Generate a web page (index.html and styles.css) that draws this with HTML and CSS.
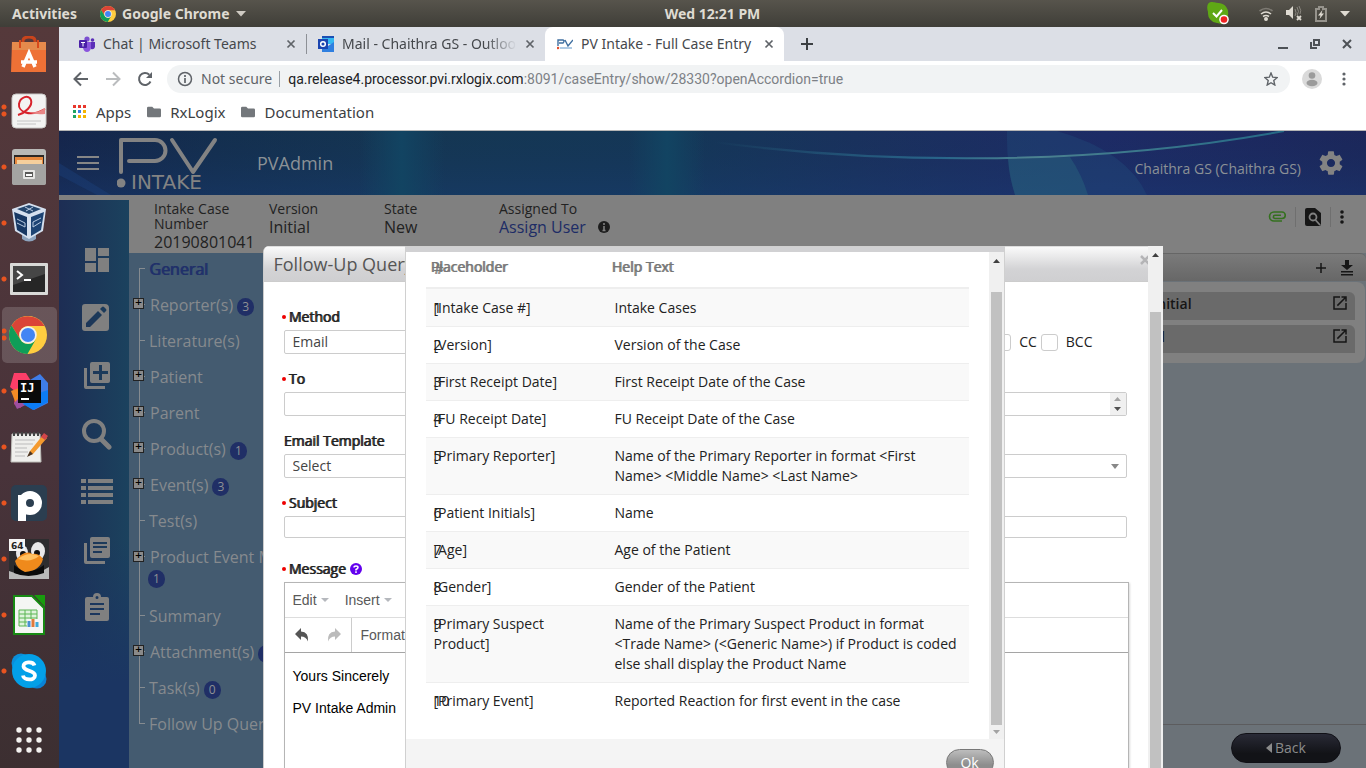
FILE: index.html
```html
<!DOCTYPE html>
<html lang="en">
<head>
<meta charset="utf-8">
<title>PV Intake - Full Case Entry</title>
<link rel="stylesheet" href="styles.css">
</head>
<body>
<svg class="defs" width="0" height="0" aria-hidden="true">
  <symbol id="chrome" viewBox="0 0 36 36">
    <circle cx="18" cy="18" r="18" fill="#ffcd40"/>
    <path d="M2.4 9A18 18 0 0 1 33.6 9.500H18a8.500 8.500 0 0 0-7.700 12z" fill="#db4437"/>
    <path d="M2.4 9A18 18 0 0 0 17.500 36L25.500 22a8.500 8.500 0 0 1-15.200-.5z" fill="#0f9d58"/>
    <circle cx="18" cy="18" r="8.300" fill="#f1f1f1"/><circle cx="18" cy="18" r="6.700" fill="#4285f4"/>
  </symbol>
  <symbol id="close" viewBox="0 0 10 10"><path d="M1.500 1.500l7 7m0-7l-7 7" stroke="#5f6368" stroke-width="1.700" fill="none"/></symbol>
  <symbol id="folder" viewBox="0 0 16 14"><path d="M1.500 1h4.500l2 2h6.500A1.500 1.500 0 0 1 16 4.500v7a1.500 1.500 0 0 1-1.500 1.500h-13A1.500 1.500 0 0 1 0 11.500v-9A1.500 1.500 0 0 1 1.500 1z" fill="#73777b"/></symbol>
  <symbol id="open" viewBox="0 0 24 24"><path d="M19 19H5V5h7V3H3v18h18v-9h-2zM14 3v2h3.600l-9.800 9.800 1.400 1.400L19 6.400V10h2V3z" fill="#161616"/></symbol>
</svg>

<header class="topbar">
  <div class="topbar-left">
    <span>Activities</span>
    <svg width="16" height="16"><use href="#chrome"/></svg>
    <span class="app-menu">Google Chrome</span>
    <svg width="10" height="6" viewBox="0 0 10 6"><path d="M0 0h10L5 5.500z" fill="#cfcbc3"/></svg>
  </div>
  <time class="clock">Wed 12:21 PM</time>
  <div class="topbar-right">
    <svg class="skype-tray" width="22" height="23" viewBox="0 0 22 23"><path d="M4 0C8 0 9 1 12 1a10 10 0 0 1 9 12c1 6-2 9-6 9-2 0-3-1-5-1A10 10 0 0 1 1 10C-1 4 1 0 4 0z" fill="#5fa815"/><path d="M6 11l3.500 3.500L15 8" stroke="#fff" stroke-width="2" fill="none"/><circle cx="17" cy="17.500" r="4.800" fill="#fff"/><circle cx="17" cy="17.500" r="3.300" fill="#e22"/></svg>
    <svg width="14" height="14" viewBox="0 0 14 14" fill="none" stroke="#dfdbd2" stroke-width="1.600"><path d="M.5 4q6.500-5 13 0" stroke="#7d7a73"/><path d="M2 7q5-4 10 0M4 9.500q3-2 6 0"/><circle cx="7" cy="12" r="1.200" fill="#dfdbd2"/></svg>
    <svg width="16" height="15" viewBox="0 0 16 15"><path d="M0 4h3l4-4v13L3 9H0z" fill="#dfdbd2"/><path d="M9 3q2 3.500 0 7M11 1q3 5 0 8M13 0q3 5 1 8" stroke="#8a877f" fill="none"/><path d="M11 10l4 4m0-4l-4 4" stroke="#dfdbd2" stroke-width="1.800"/></svg>
    <svg width="12" height="16" viewBox="0 0 12 16"><path d="M1 3h3V1h4v2h3v12H1z" stroke="#96938c" stroke-width="2" fill="none"/><path d="M7.500 4L3 9.500h2.500L4.500 13 9 7.500H6.500z" fill="#dfdbd2"/></svg>
    <svg width="10" height="6" viewBox="0 0 10 6"><path d="M0 0h10L5 5.500z" fill="#dfdbd2"/></svg>
  </div>
</header>

<div class="desktop">
  <nav class="dock" aria-label="Dock">
    <div class="dock-item"><svg width="36" height="38" viewBox="0 0 36 38"><path d="M12 8V5q0-4 6-4t6 4v3" stroke="#c9441c" stroke-width="3" fill="none"/><path d="M1 6h34v30H0z" fill="#ee7136"/><path d="M1 6h34v8H1z" fill="#e58a4c"/><path d="M9 4v8M27 4v8" stroke="#d84a1b" stroke-width="2"/><path d="M12 31l6-14 6 14M10 26h16" stroke="#fff" stroke-width="3.500" fill="none"/></svg></div>
    <div class="dock-item run two"><svg width="36" height="36" viewBox="0 0 36 36"><rect x="1" y="1" width="34" height="34" rx="4" fill="#f3f3f2" stroke="#c9c9c7"/><path d="M7 22C14 20 22 13 20 7S9 4 8 11s10 14 26 5" stroke="#d8232c" stroke-width="2" fill="none"/><path d="M16 19q9 2 18-4v6q-9 1-18-2z" fill="#e98786"/><path d="M6 28h24M6 31h19" stroke="#c4c4c4"/></svg></div>
    <div class="dock-item run"><svg width="36" height="38" viewBox="0 0 36 38"><rect x="1" y="1" width="34" height="36" rx="3" fill="#b9b9b7"/><path d="M3 7h30v9H3z" fill="#2c2826"/><path d="M4 9h28v7H4z" fill="#e8893f"/><path d="M6 12h25v4H6z" fill="#f5cf9c"/><path d="M1 16h34v19q0 2-2 2H3q-2 0-2-2z" fill="#a4a4a2"/><rect x="12" y="22" width="12" height="9" rx="1" fill="#e6e6e4"/><rect x="14" y="24" width="8" height="5" fill="#5a5a58"/><rect x="15" y="26" width="6" height="2" fill="#fff"/></svg></div>
    <div class="dock-item run"><svg width="34" height="40" viewBox="0 0 34 40"><path d="M10 32h14v4q-7 5-14 0z" fill="#8da4bf"/><path d="M17 0l17 6-3 22-14 8L3 28 0 6z" fill="#d5e0ef"/><path d="M17 2l12 4-12 5L5 6z" fill="#24466e"/><path d="M2 9l13 5v19L5 27z" fill="#173864"/><path d="M32 9l-13 5v19l10-6z" fill="#1d4474"/><path d="M5 16l8 4v4l-8-4M29 15l-8 4v5l8-5M13 4l8 4M21 4l-7 4" stroke="#b9cbe2" fill="none"/></svg></div>
    <div class="dock-item run"><svg width="38" height="32" viewBox="0 0 38 32"><rect width="38" height="32" rx="1" fill="#d9d9d7"/><rect x="3" y="3" width="32" height="26" fill="#262626"/><path d="M3 3h32v8L3 22z" fill="#464646"/><path d="M7 8l5 4-5 4" stroke="#fff" stroke-width="2" fill="none"/><path d="M14 17h7" stroke="#fff" stroke-width="2"/></svg></div>
    <div class="dock-item run two active"><svg width="38" height="38"><use href="#chrome"/></svg></div>
    <div class="dock-item run"><svg width="38" height="38" viewBox="0 0 38 38"><path d="M4 1h12l5 8-6 22-5 5-6-4 2-12-6-5z" fill="#fc3e68"/><path d="M1 19l8-3 3 10-6 6z" fill="#f38b25"/><path d="M4 31l8-8 8 8-13 6z" fill="#9b4fa0"/><path d="M20 8l10-6 8 9v20l-14 7-12-7z" fill="#3f7de8"/><path d="M26 22l12-4v12l-15 8-10-6z" fill="#0c7cf5"/><rect x="8" y="8" width="23" height="23" fill="#0a0a0a"/><text x="10" y="20" class="ij">IJ</text><path d="M11 27h8" stroke="#fff" stroke-width="2"/></svg></div>
    <div class="dock-item run"><svg width="38" height="32" viewBox="0 0 38 32"><path d="M2 3h28l1 28H1z" fill="#efefec" stroke="#bdbdb8"/><path d="M4 1v4M8 1v4M12 1v4M16 1v4M20 1v4M24 1v4M28 1v4" stroke="#444" stroke-width="2"/><path d="M5 9h20M5 13h18M5 17h12M5 21h13M5 25h10" stroke="#bbb"/><path d="M20 20L33 4l4 3-14 16-5 2z" fill="#f49a2f"/><path d="M31 6l3-4 4 3-3 4z" fill="#d4464a"/><path d="M20 20l3 3-6 3z" fill="#4a3626"/></svg></div>
    <div class="dock-item run"><svg width="36" height="36" viewBox="0 0 36 36"><rect width="36" height="36" rx="5" fill="#2b3e50"/><path d="M11 36V10" stroke="#fff" stroke-width="8"/><circle cx="19" cy="18" r="8" stroke="#fff" stroke-width="8" fill="none"/></svg></div>
    <div class="dock-item run"><svg width="40" height="40" viewBox="0 0 40 40"><rect width="40" height="40" fill="#2d2d2f"/><path d="M0 32q20 9 40-4v12H0z" fill="#b9b9b9"/><path d="M5 26q14 12 30 0v8q-16 6-30 0z" fill="#0a0a0a"/><ellipse cx="29" cy="12" rx="7" ry="9" fill="#e8e8e8"/><ellipse cx="13" cy="14" rx="6" ry="8" fill="#e8e8e8"/><circle cx="28" cy="14" r="3" fill="#111"/><circle cx="14" cy="15" r="3" fill="#111"/><path d="M6 22q10-12 17-7 7-1 11 5-3 12-18 13Q8 30 6 22z" fill="#ef8a1c"/><path d="M9 20q10-8 21-3-8 7-21 3z" fill="#ffc060"/><rect width="16" height="12" fill="#f5f5f5"/><text x="2" y="10" class="badge64">64</text></svg></div>
    <div class="dock-item run"><svg width="32" height="40" viewBox="0 0 32 40"><path d="M1 1h18l12 12v26H1z" fill="#f4f6f4" stroke="#178a13" stroke-width="2"/><path d="M21 0h11v12z" fill="#199c0e"/><path d="M6 15h18v16H6z" fill="#dff3dc" stroke="#5ab552"/><path d="M6 19h18M6 23h18M6 27h18M12 15v16M18 15v16" stroke="#5ab552"/><path d="M14 24h12v8H14z" fill="#f6f6f6"/><path d="M16 32v-6" stroke="#4a90d0" stroke-width="3"/><path d="M20 32v-8" stroke="#e07b3a" stroke-width="3"/><path d="M24 32v-5" stroke="#3faad8" stroke-width="3"/></svg></div>
    <div class="dock-item run"><svg width="36" height="36" viewBox="0 0 36 36"><circle cx="10" cy="10" r="9.500" fill="#0a8ed9"/><circle cx="26" cy="26" r="9.500" fill="#0a83d6"/><circle cx="18" cy="18" r="17" fill="#03a0e8"/><path d="M23.500 12.500C22 8 12 8.500 12.500 13.500S24 17 24 22.500 12.500 27.500 12 22.500" stroke="#fff" stroke-width="3.800" fill="none"/></svg></div>
    <button class="dock-item apps-grid" aria-label="Show applications"><svg width="26" height="26" viewBox="0 0 26 26" fill="#f3f1ef"><circle cx="3" cy="3" r="2.700"/><circle cx="13" cy="3" r="2.700"/><circle cx="23" cy="3" r="2.700"/><circle cx="3" cy="13" r="2.700"/><circle cx="13" cy="13" r="2.700"/><circle cx="23" cy="13" r="2.700"/><circle cx="3" cy="23" r="2.700"/><circle cx="13" cy="23" r="2.700"/><circle cx="23" cy="23" r="2.700"/></svg></button>
  </nav>

  <div class="window">
    <div class="tabs">
      <div class="tab"><svg width="16" height="16" viewBox="0 0 16 16"><circle cx="8" cy="3" r="2.600" fill="#7b4fd0"/><circle cx="13.500" cy="4" r="1.800" fill="#5a2fb8"/><path d="M11 6h5v5q-1 3-4 2z" fill="#5a2fb8"/><path d="M4 6h8v6q-1 4-4 4t-4-4z" fill="#8a55dd"/><rect y="4" width="8" height="8" rx="1" fill="#4b1fa8"/><path d="M2 6.500h4M4 6.500v4" stroke="#fff"/></svg><span class="tab-title">Chat | Microsoft Teams</span><svg width="10" height="10"><use href="#close"/></svg></div>
      <div class="tab divided"><svg width="16" height="16" viewBox="0 0 16 16"><path d="M4 0h12v8H4z" fill="#35b8f1"/><path d="M4 0h12v2H4z" fill="#1a4fb5"/><path d="M4 8l6 2 6-4v10H4z" fill="#2f7fe0"/><rect y="3" width="10" height="10" fill="#1b45b0"/><circle cx="5" cy="8" r="2.300" stroke="#fff" stroke-width="1.500" fill="none"/></svg><span class="tab-title fade">Mail - Chaithra GS - Outlook</span><svg width="10" height="10"><use href="#close"/></svg></div>
      <div class="tab current"><svg width="16" height="16" viewBox="0 0 16 16" fill="none" stroke="#3f6fa0" stroke-width="1.400"><path d="M1 10V4h5q2 1 0 3H2M8 4l3 6 5-6"/><path d="M3 12h12" stroke="#8db4d8"/><circle cx="1" cy="12" r=".6" stroke="#e05030"/></svg><span class="tab-title">PV Intake - Full Case Entry</span><svg width="10" height="10"><use href="#close"/></svg></div>
      <button class="new-tab" aria-label="New tab"><svg width="12" height="12" viewBox="0 0 12 12"><path d="M6 0v12M0 6h12" stroke="#3c4043" stroke-width="2"/></svg></button>
      <div class="win-buttons">
        <svg width="10" height="10" viewBox="0 0 10 10"><path d="M0 9h10" stroke="#4d5156" stroke-width="2"/></svg>
        <svg width="10" height="10" viewBox="0 0 10 10" fill="none" stroke="#4d5156" stroke-width="2"><path d="M4 1h5v5H4zM1 3v6h6"/></svg>
        <svg width="10" height="10" viewBox="0 0 10 10"><path d="M1 1l8 8m0-8l-8 8" stroke="#4d5156" stroke-width="2"/></svg>
      </div>
    </div>
    <div class="toolbar">
      <svg width="16" height="16" viewBox="0 0 16 16" fill="none" stroke="#5f6368" stroke-width="2"><path d="M15 8H2M8 1.500L1.500 8 8 14.500"/></svg>
      <svg width="16" height="16" viewBox="0 0 16 16" fill="none" stroke="#babcbe" stroke-width="2"><path d="M1 8h13M8 1.500L14.500 8 8 14.500"/></svg>
      <svg width="16" height="16" viewBox="0 0 16 16"><path d="M13.500 10.500A6 6 0 1 1 12.300 3.700" fill="none" stroke="#5f6368" stroke-width="2"/><path d="M15 1v6H9z" fill="#5f6368"/></svg>
      <div class="omnibox">
        <svg width="16" height="16" viewBox="0 0 16 16"><circle cx="8" cy="8" r="6.500" fill="none" stroke="#5f6368" stroke-width="1.500"/><path d="M8 7v5M8 4v2" stroke="#5f6368" stroke-width="1.700"/></svg>
        <span class="insecure">Not secure</span>
        <span class="url"><b>qa.release4.processor.pvi.rxlogix.com</b>:8091/caseEntry/show/28330?openAccordion=true</span>
        <svg width="14" height="14" viewBox="0 0 14 14"><path d="M7 1l1.700 4.200 4.500.4-3.400 3 1 4.400L7 10.700 3.200 13l1-4.400-3.400-3 4.500-.4z" fill="none" stroke="#5f6368" stroke-width="1.400"/></svg>
      </div>
      <svg class="avatar" width="20" height="20" viewBox="0 0 20 20"><circle cx="10" cy="10" r="10" fill="#dadada"/><circle cx="10" cy="6.500" r="3.300" fill="#9b9b9b"/><ellipse cx="10" cy="14" rx="5.500" ry="3.300" fill="#9b9b9b"/></svg>
      <svg width="4" height="14" viewBox="0 0 4 14" fill="#5f6368"><circle cx="2" cy="2" r="1.600"/><circle cx="2" cy="7" r="1.600"/><circle cx="2" cy="12" r="1.600"/></svg>
    </div>
    <div class="bookmarks">
      <a href="#"><svg width="14" height="14" viewBox="0 0 14 14"><path d="M0 0h3v3H0zM5 0h3v3H5zM10 0h3v3h-3z" fill="#e8372c"/><path d="M0 5h3v3H0zM0 10h3v3H0z" fill="#1fa463"/><path d="M5 5h3v3H5z" fill="#3b7de8"/><path d="M10 5h3v3h-3zM5 10h3v3H5zM10 10h3v3h-3z" fill="#f4b400"/></svg>Apps</a>
      <a href="#"><svg width="14" height="14"><use href="#folder"/></svg>RxLogix</a>
      <a href="#"><svg width="14" height="14"><use href="#folder"/></svg>Documentation</a>
    </div>

    <div class="page">
      <header class="app-header">
        <svg class="header-art" viewBox="0 0 1307 64" preserveAspectRatio="none" aria-hidden="true">
          <defs>
            <linearGradient id="g1"><stop offset="0" stop-color="#16244b"/><stop offset=".12" stop-color="#14304f"/><stop offset=".3" stop-color="#153a55"/><stop offset=".48" stop-color="#153a5a"/><stop offset=".63" stop-color="#1c3262"/><stop offset=".8" stop-color="#202b6c"/><stop offset="1" stop-color="#1e265e"/></linearGradient>
            <linearGradient id="g2" x2="0" y2="1"><stop offset="0" stop-color="#122a4c" stop-opacity=".2"/><stop offset="1" stop-color="#18386c" stop-opacity=".5"/></linearGradient>
            <linearGradient id="g3"><stop offset="0" stop-color="#124462" stop-opacity="0"/><stop offset=".5" stop-color="#124462"/><stop offset="1" stop-color="#124462" stop-opacity="0"/></linearGradient>
            <linearGradient id="g4"><stop offset="0" stop-color="#2b7288" stop-opacity="0"/><stop offset=".4" stop-color="#28658a"/><stop offset=".55" stop-color="#4c8290"/><stop offset="1" stop-color="#256a86"/></linearGradient>
          </defs>
          <path d="M0 0h1307v64H0z" fill="url(#g1)"/><path d="M0 0h1307v64H0z" fill="url(#g2)"/>
          <path d="M300 0h86v64h-86z" fill="url(#g3)"/><path d="M570 0h76v64h-76z" fill="url(#g3)"/>
          <path d="M0 32L52 64H38L0 44z" fill="#1e4583" opacity=".35"/>
          <path d="M948 0h50q70 20 90 64H956q-9-30-8-64z" fill="#22507d" opacity=".35"/>
          <path d="M949 28l62-2q12 18 18 38h-73q-6-18-7-36z" fill="#2a6c80" opacity=".4"/>
          <path d="M655 11C800 31 1020 38 1225 0" fill="none" stroke="url(#g4)" stroke-width="2"/>
        </svg>
        <button class="menu" aria-label="Menu"><svg width="22" height="16" viewBox="0 0 22 16"><path d="M0 2h22M0 8h22M0 14h22" stroke="#868686" stroke-width="2"/></svg></button>
        <svg class="logo" width="102" height="54" viewBox="0 0 102 54" role="img" aria-label="PV Intake"><g fill="none" stroke="#838383" stroke-width="4" stroke-linecap="round" stroke-linejoin="round"><path d="M4 36V4h34a10 10 0 0 1 0 21H12"/><path d="M55 4l21 32L98 4"/></g><circle cx="4" cy="47" r="4.500" fill="#838383"/><text x="14" y="53" class="logo-text">INTAKE</text></svg>
        <span class="product">PVAdmin</span>
        <span class="user">Chaithra GS (Chaithra GS)</span>
        <svg class="gear" width="28" height="28" viewBox="0 0 24 24"><path fill="#838383" d="M19.430 12.980c.04-.32.07-.64.07-.98s-.03-.66-.07-.98l2.110-1.650c.19-.15.24-.42.12-.64l-2-3.460c-.12-.22-.39-.3-.61-.22l-2.490 1c-.52-.4-1.080-.73-1.690-.98l-.38-2.650C14.460 2.180 14.250 2 14 2h-4c-.25 0-.46.18-.49.42l-.38 2.650c-.61.25-1.170.59-1.690.98l-2.490-1c-.23-.09-.49 0-.61.22l-2 3.460c-.13.22-.07.49.12.64l2.110 1.650c-.04.32-.07.65-.07.98s.03.66.07.98l-2.110 1.650c-.19.15-.24.42-.12.64l2 3.460c.12.22.39.3.61.22l2.490-1c.52.4 1.080.73 1.690.98l.38 2.650c.03.24.24.42.49.42h4c.25 0 .46-.18.49-.42l.38-2.650c.61-.25 1.170-.59 1.690-.98l2.490 1c.23.09.49 0 .61-.22l2-3.460c.12-.22.07-.49-.12-.64l-2.110-1.650zM12 15.500c-1.930 0-3.500-1.570-3.500-3.500s1.570-3.500 3.500-3.500 3.500 1.570 3.500 3.500-1.570 3.500-3.500 3.500z"/></svg>
      </header>

      <div class="workspace">
        <nav class="rail" aria-label="Main">
          <svg viewBox="0 0 32 32"><path d="M4 4h11v13H4zM17 4h11v8H17zM4 19h11v9H4zM17 14h11v14H17z"/></svg>
          <svg viewBox="0 0 32 32"><path fill-rule="evenodd" d="M4 2h20a4 4 0 0 1 4 4v20a3 3 0 0 1-3 3H4a3 3 0 0 1-3-3V5a3 3 0 0 1 3-3zm1 19v4h4l12-12-4-4zm14-14l4 4 2-2q1-1 0-2l-2-2q-1-1-2 0z"/></svg>
          <svg viewBox="0 0 32 32"><path fill-rule="evenodd" d="M11 2h16a2 2 0 0 1 2 2v17a2 2 0 0 1-2 2H11a2 2 0 0 1-2-2V4a2 2 0 0 1 2-2zm1 9v3h6v6h3v-6h6v-3h-6V5h-3v6z"/><path d="M3 8h3v18h18v3H5q-2 0-2-2z"/></svg>
          <svg viewBox="0 0 32 32"><circle cx="13" cy="13" r="10" fill="none" stroke="#808080" stroke-width="4"/><path d="M20 21l8 8" stroke="#808080" stroke-width="5" stroke-linecap="round"/></svg>
          <svg viewBox="0 0 32 32"><path d="M0 3h5v4H0zM7 3h25v4H7zM0 10h5v4H0zM7 10h25v4H7zM0 17h5v4H0zM7 17h25v4H7zM0 24h5v4H0zM7 24h25v4H7z"/></svg>
          <svg viewBox="0 0 32 32"><path fill-rule="evenodd" d="M11 3h16a2 2 0 0 1 2 2v17a2 2 0 0 1-2 2H11a2 2 0 0 1-2-2V5a2 2 0 0 1 2-2zm1 5v2h14V8zm0 4v2h14v-2zm0 5v2h9v-2z"/><path d="M3 9h3v18h18v3H5q-2 0-2-2z"/></svg>
          <svg viewBox="0 0 32 32"><path fill-rule="evenodd" d="M6 5h6a4 4 0 0 1 8 0h6a2 2 0 0 1 2 2v20a2 2 0 0 1-2 2H6a2 2 0 0 1-2-2V7a2 2 0 0 1 2-2zm10-1a1 1 0 0 0 0 3 1 1 0 0 0 0-3zM9 11v2h14v-2zm0 5v2h14v-2zm0 5v2h10v-2z"/></svg>
        </nav>
        <div class="case">
          <div class="case-bar">
            <dl class="facts">
              <div><dt>Intake Case Number</dt><dd>20190801041</dd></div>
              <div><dt>Version</dt><dd>Initial</dd></div>
              <div><dt>State</dt><dd>New</dd></div>
              <div class="wide"><dt>Assigned To</dt><dd><a href="#">Assign User</a><svg width="12" height="12" viewBox="0 0 12 12"><circle cx="6" cy="6" r="6" fill="#1d1d1d"/><path d="M6 5v4.500M6 2v2M4.500 9.500h3" stroke="#808080" stroke-width="1.600"/></svg></dd></div>
            </dl>
            <div class="case-tools">
              <svg width="18" height="12" viewBox="0 0 18 12" fill="none" stroke="#34701f" stroke-width="1.600"><path d="M14 10H6a4 4 0 0 1 0-9h8a3 3 0 0 1 0 6.500H7a1.500 1.500 0 0 1 0-3.200h6"/></svg>
              <span class="sep"></span>
              <svg width="16" height="18" viewBox="0 0 16 18"><path d="M2 0h8l6 5v11q0 2-2 2H2q-2 0-2-2V2q0-2 2-2z" fill="#161616"/><circle cx="8" cy="9" r="3.500" stroke="#808080" stroke-width="1.800" fill="none"/><path d="M10.500 12l4.500 5" stroke="#808080" stroke-width="1.800"/></svg>
              <span class="sep"></span>
              <svg width="4" height="14" viewBox="0 0 4 14" fill="#161616"><circle cx="2" cy="2" r="1.800"/><circle cx="2" cy="7" r="1.800"/><circle cx="2" cy="12" r="1.800"/></svg>
            </div>
          </div>
          <div class="case-body">
            <ul class="tree">
              <li class="sel"><a href="#">General</a></li>
              <li class="plus"><a href="#">Reporter(s)</a><span class="badge">3</span></li>
              <li><a href="#">Literature(s)</a></li>
              <li class="plus"><a href="#">Patient</a></li>
              <li class="plus"><a href="#">Parent</a></li>
              <li class="plus"><a href="#">Product(s)</a><span class="badge">1</span></li>
              <li class="plus"><a href="#">Event(s)</a><span class="badge">3</span></li>
              <li><a href="#">Test(s)</a></li>
              <li class="plus tall"><a href="#">Product Event Matrix</a><span class="badge">1</span></li>
              <li><a href="#">Summary</a></li>
              <li class="plus"><a href="#">Attachment(s)</a><span class="badge">2</span></li>
              <li><a href="#">Task(s)</a><span class="badge">0</span></li>
              <li><a href="#">Follow Up Queries</a></li>
            </ul>
            <main class="content">
              <div class="strip"><svg width="12" height="12" viewBox="0 0 12 12"><path d="M6 1v10M1 6h10" stroke="#161616" stroke-width="1.500"/></svg><svg width="12" height="16" viewBox="0 0 12 16"><path d="M4 0h4v5h4L6 10 0 5h4zM0 11h12v1.500H0zM0 14h12v1.500H0z" fill="#161616"/></svg></div>
              <div class="card">
                <div class="row"><span>Initial</span><svg width="18" height="18"><use href="#open"/></svg></div>
                <div class="row"><span>al</span><svg width="18" height="18"><use href="#open"/></svg></div>
              </div>
              <footer class="actions"><button class="back"><svg width="6" height="10" viewBox="0 0 6 10"><path d="M6 0v10L0 5z" fill="#8b8b8b"/></svg>Back</button></footer>
            </main>
          </div>
        </div>
      </div>

      <section class="dialog query" role="dialog" aria-labelledby="query-title">
        <div class="dialog-main">
          <header class="dialog-head"><h2 id="query-title">Follow-Up Query</h2><button class="dismiss" aria-label="Close"><svg width="8" height="10" viewBox="0 0 8 10"><path d="M1 1l8 8m0-8L1 9" stroke="#b4b4b6" stroke-width="2.500"/></svg></button></header>
          <form class="form">
            <div class="field">
              <label class="req" for="method">Method</label>
              <div class="method-row">
                <select id="method"><option>Email</option></select>
                <div class="checks"><input type="checkbox" id="cc"><label for="cc">CC</label><input type="checkbox" id="bcc"><label for="bcc">BCC</label></div>
              </div>
            </div>
            <div class="field"><label class="req" for="to">To</label><div class="box"><input id="to" type="text"><span class="spin"><svg width="7" height="4" viewBox="0 0 7 4"><path d="M0 4h7L3.500 0z" fill="#a3a3a3"/></svg><svg width="7" height="4" viewBox="0 0 7 4"><path d="M0 0h7L3.500 4z" fill="#505050"/></svg></span></div></div>
            <div class="field"><label for="template">Email Template</label><div class="box"><select id="template"><option>Select</option></select><svg class="caret" width="8" height="5" viewBox="0 0 8 5"><path d="M0 0h8L4 5z" fill="#888"/></svg></div></div>
            <div class="field subject"><label class="req" for="subject">Subject</label><input id="subject" type="text"></div>
            <div class="field message"><label class="req" for="message">Message</label><svg class="help" width="12" height="12" viewBox="0 0 12 12"><circle cx="6" cy="6" r="6" fill="#6200ee"/><path d="M4 4.500Q4 3 6 3t2 1.500Q8 5.500 6 6.500V7.500M6 8.300V10" stroke="#fff" stroke-width="1.500" fill="none"/></svg></div>
            <div class="editor">
              <div class="editor-menu"><button type="button">Edit<i></i></button><button type="button">Insert<i></i></button></div>
              <div class="editor-tools">
                <button type="button" aria-label="Undo"><svg width="14" height="14" viewBox="0 0 14 14"><path d="M6 0v3.500q8 .5 7 10Q11 8.500 6 8.500V12L0 6z" fill="#555"/></svg></button>
                <button type="button" aria-label="Redo"><svg width="14" height="14" viewBox="0 0 14 14"><path d="M8 0v3.500q-8 .5-7 10Q3 8.500 8 8.500V12l6-6z" fill="#bbb"/></svg></button>
                <button type="button" class="formats">Formats</button>
              </div>
              <textarea id="message">Yours Sincerely

PV Intake Admin</textarea>
            </div>
          </form>
        </div>
        <div class="scroll"><svg width="7" height="4" viewBox="0 0 7 4"><path d="M0 4h7L3.500 0z" fill="#404040"/></svg><span class="thumb"></span></div>
      </section>

      <section class="dialog help-dialog" role="dialog" aria-label="Placeholders">
        <div class="help-top"></div>
        <div class="help-body">
          <table class="help-table">
            <thead><tr><th class="num">#</th><th>Placeholder</th><th>Help Text</th></tr></thead>
            <tbody>
              <tr><td>1</td><td>[Intake Case #]</td><td>Intake Cases</td></tr>
              <tr><td>2</td><td>[Version]</td><td>Version of the Case</td></tr>
              <tr><td>3</td><td>[First Receipt Date]</td><td>First Receipt Date of the Case</td></tr>
              <tr><td>4</td><td>[FU Receipt Date]</td><td>FU Receipt Date of the Case</td></tr>
              <tr><td>5</td><td>[Primary Reporter]</td><td>Name of the Primary Reporter in format &lt;First Name&gt; &lt;Middle Name&gt; &lt;Last Name&gt;</td></tr>
              <tr><td>6</td><td>[Patient Initials]</td><td>Name</td></tr>
              <tr><td>7</td><td>[Age]</td><td>Age of the Patient</td></tr>
              <tr><td>8</td><td>[Gender]</td><td>Gender of the Patient</td></tr>
              <tr><td>9</td><td>[Primary Suspect Product]</td><td>Name of the Primary Suspect Product in format &lt;Trade Name&gt; (&lt;Generic Name&gt;) if Product is coded else shall display the Product Name</td></tr>
              <tr><td>10</td><td>[Primary Event]</td><td>Reported Reaction for first event in the case</td></tr>
            </tbody>
          </table>
          <div class="scroll"><svg width="7" height="4" viewBox="0 0 7 4"><path d="M0 4h7L3.500 0z" fill="#404040"/></svg><span class="thumb"></span><svg width="7" height="4" viewBox="0 0 7 4"><path d="M0 0h7L3.500 4z" fill="#a3a3a3"/></svg></div>
        </div>
        <footer class="help-foot"><button class="ok">Ok</button></footer>
      </section>
    </div>
  </div>
</div>
</body>
</html>
```
FILE: styles.css
```css
* { box-sizing: border-box; }
html, body { height: 100%; }
body {
  margin: 0;
  display: flex;
  flex-direction: column;
  overflow: hidden;
  font: 14px/20px "Open Sans", "Noto Sans", sans-serif;
  color: #222;
}
button, input, select, textarea { font: inherit; color: inherit; }
button { border: 0; padding: 0; background: none; }
a { color: inherit; text-decoration: none; }
svg { flex: none; display: block; }
.defs { position: absolute; }

/* Desktop bar */
.topbar {
  flex: none;
  height: 27px;
  display: flex;
  align-items: center;
  padding: 0 16px 0 12px;
  background: linear-gradient(#57544c, #3f3e38);
  color: #dfdbd2;
  font: bold 14px/20px "Noto Sans", sans-serif;
}
.topbar-left, .topbar-right { flex: 1 1 0; display: flex; align-items: center; }
.topbar-left { gap: 6px; }
.topbar-left span:first-child { margin-right: 17px; }
.clock { margin-left: 63px; }
.topbar-right { justify-content: flex-end; gap: 13px; }
.skype-tray { margin-right: 17px; }

.desktop { flex: 1; min-height: 0; display: flex; }
.dock {
  flex: none;
  width: 59px;
  display: flex;
  flex-direction: column;
  background: linear-gradient(#55393b, #48333a 60%, #3c2f31);
}
.dock-item {
  flex: none;
  width: 59px;
  height: 56px;
  display: flex;
  align-items: center;
  justify-content: center;
  padding-right: 2px;
  background-repeat: no-repeat;
}
.dock-item.run { background-image: radial-gradient(circle, #e95420 2px, transparent 3px); background-size: 6px 6px; background-position: 1px 25px; }
.dock-item.two { background-image: radial-gradient(circle, #e95420 2px, transparent 3px), radial-gradient(circle, #e95420 2px, transparent 3px); background-position: 1px 21px, 1px 28px; }
.dock-item.active { width: 55px; margin-left: 2px; padding-right: 3px; background-color: rgba(255, 255, 255, .16); background-position: -1px 21px, -1px 28px; border-radius: 5px; }
.dock .apps-grid { margin-top: auto; }
.ij { font: bold 12px "DejaVu Sans Mono", monospace; fill: #fff; }
.badge64 { font: bold 9px "DejaVu Sans", sans-serif; fill: #222; }

/* Browser */
.window { flex: 1; min-width: 0; display: flex; flex-direction: column; font-family: "Noto Sans", sans-serif; }
.tabs { flex: none; height: 34px; display: flex; align-items: center; padding-left: 8px; background: #dcdfe6; color: #45484c; }
.tab { flex: 0 1 239px; min-width: 0; height: 34px; display: flex; align-items: center; gap: 8px; padding: 0 10px 0 12px; }
.tab-title { flex: 1; overflow: hidden; white-space: nowrap; }
.tab.divided { background: linear-gradient(#8d9096, #8d9096) 0 7px / 1px 20px no-repeat; }
.fade { -webkit-mask-image: linear-gradient(90deg, #000 82%, transparent); mask-image: linear-gradient(90deg, #000 82%, transparent); }
.tab.current { background: #fff; border-radius: 8px 8px 0 0; }
.new-tab { margin-left: 17px; }
.win-buttons { display: flex; gap: 22px; margin-left: auto; padding-right: 14px; }
.toolbar { flex: none; height: 36px; display: flex; align-items: center; gap: 16px; padding: 0 20px 0 14px; background: #fff; }
.omnibox { flex: 1; min-width: 0; height: 28px; margin-left: -2px; padding: 0 12px 0 10px; display: flex; align-items: center; gap: 8px; border-radius: 14px; background: #f1f3f4; color: #7d8186; }
.insecure { padding-right: 7px; border-right: 1px solid #9aa0a6; line-height: 16px; color: #5f6368; }
.url { flex: 1; overflow: hidden; white-space: nowrap; font-family: Roboto, sans-serif; }
.url b { font-weight: normal; color: #202124; }
.avatar { margin: 0 4px 0 -4px; }
.bookmarks { flex: none; height: 34px; display: flex; align-items: flex-start; gap: 16px; padding: 5px 14px; border-bottom: 1px solid #b5b5b5; background: #fff; color: #3c4043; font-size: 15px; }
.bookmarks a { display: flex; align-items: center; gap: 9px; }

/* Application */
.page { flex: 1; min-height: 0; display: flex; flex-direction: column; position: relative; overflow: hidden; background: #808080; font-family: "Open Sans", sans-serif; }
.app-header { position: relative; flex: none; height: 64px; display: flex; align-items: center; padding: 0 21px 0 18px; color: #8b9196; }
.app-header > * { position: relative; }
.app-header .header-art { position: absolute; inset: 0; width: 100%; height: 100%; }
.logo { margin-left: 18px; }
.logo-text { font: 20px "DejaVu Sans", sans-serif; fill: #838383; }
.product { margin-left: 38px; font-size: 18px; }
.user { margin: 12px 16px 0 auto; }

.workspace { flex: 1; min-height: 0; display: flex; }
.rail { flex: none; width: 70px; margin-top: 5px; padding: 44px 0 0 6px; display: flex; flex-direction: column; align-items: center; gap: 26px; background: linear-gradient(transparent 60%, #1b3562 85%), linear-gradient(90deg, #1d2d54, #1b425e); }
.rail svg { width: 32px; height: 32px; fill: #808080; }
.case { flex: 1; min-width: 0; display: flex; flex-direction: column; }
.case-bar { flex: none; height: 58px; display: flex; justify-content: space-between; padding: 6px 22px 0 25px; color: #222; }
.facts { display: flex; margin: 0; }
.facts div { width: 115px; padding-right: 20px; }
.facts dt { line-height: 15px; }
.facts dd { margin: 0; font-size: 16px; line-height: 22px; white-space: nowrap; display: flex; align-items: center; gap: 12px; }
.facts a { color: #1d2c66; }
.case-tools { display: flex; align-items: center; height: 32px; gap: 9px; }
.sep { width: 1px; height: 20px; background: #6f6f6f; }
.case-body { flex: 1; min-height: 0; display: flex; }
.tree { flex: none; width: 150px; margin: 0; padding: 0 0 0 10px; list-style: none; background: #445b70; color: #868a8e; font-size: 16px; }
.tree li { height: 36px; display: flex; flex-wrap: nowrap; align-items: center; padding: 0 0 4px 10px; white-space: nowrap; gap: 4px; background: linear-gradient(#858b90, #858b90) 0 15px / 6px 1px no-repeat, linear-gradient(#858b90, #858b90) 0 0 / 1px 100% repeat-y; }
.tree li:first-child { background-position: 0 15px, 0 15px; background-repeat: no-repeat; }
.tree li:last-child { background-size: 6px 1px, 1px 16px; background-repeat: no-repeat; }
.tree .sel { color: #20306a; text-shadow: 1px 0 currentColor; }
.tree .plus::before { content: "+"; flex: none; width: 9px; height: 9px; margin: 0 2px 3px -15px; border: 1px solid #222; background: #8a8a8a; color: #000; font: bold 9px/7px "DejaVu Sans", sans-serif; text-align: center; }
.tree .plus { padding-left: 9px; }
.tree .tall { height: 59px; flex-wrap: wrap; align-content: flex-start; padding-top: 6px; gap: 0; }
.tree .tall a { margin-left: 4px; width: 120px; overflow: hidden; }
.tree .tall::before { margin-top: 2px; }
.badge { width: 17px; height: 18px; margin-top: 3px; border-radius: 9px; background: #202f66; color: #8f9194; font-size: 12px; line-height: 18px; text-align: center; }
.content { flex: 1; min-width: 0; display: flex; flex-direction: column; background: #6b7278; }
.strip { height: 28px; display: flex; align-items: center; justify-content: flex-end; gap: 14px; padding-right: 13px; border-top: 1px solid #666; border-radius: 0 6px 0 0; background: linear-gradient(#7a7a7a, #676767); }
.card { margin: 1px 1px 0 0; padding: 10px; border-radius: 8px; background: #808080; display: grid; gap: 5px; }
.row { height: 28px; display: flex; align-items: flex-start; justify-content: flex-end; padding: 2px 6px 0 0; border-radius: 0 6px 0 0; background: #6a6a6a; font-weight: 600; color: #161616; }
.row span { width: 178px; }
.actions { margin-top: auto; height: 44px; display: flex; align-items: flex-start; justify-content: flex-end; padding: 8px 25px 0 0; border-top: 1px solid #5c5c5e; }
.back { width: 110px; height: 30px; display: flex; align-items: center; justify-content: center; gap: 3px; border: 1px solid #101016; border-radius: 15px; background: linear-gradient(#292a36, #121317 70%); color: #8b8b8b; }

/* Scrollbars */
.scroll { flex: none; width: 15px; display: flex; flex-direction: column; align-items: center; background: #f0f0f0; }
.scroll .thumb { width: 11px; background: #c1c1c1; }

/* Dialogs */
.dialog { position: absolute; top: 115px; bottom: 0; display: flex; overflow: hidden; background: #fff; }
.query { left: calc(50% - 450px); width: 900px; border-left: 1px solid #ccc; border-radius: 6px 0 0 0; }
.query > .scroll { padding-top: 7px; }
.query > .scroll .thumb { flex: 1; margin-top: 55px; }
.dialog-main { flex: 1; min-width: 0; display: flex; flex-direction: column; }
.dialog-head { flex: none; height: 36px; display: flex; align-items: center; justify-content: space-between; padding: 0 0 0 10px; border-top: 1px solid #ddd; border-bottom: 1px solid #ccc; background: linear-gradient(#fafafa, #d3d3d5 65%, #cfcfd1); }
.dialog-head h2 { margin: 0; font-size: 18px; line-height: 24px; font-weight: normal; color: #555; }
.dismiss { margin-top: -8px; }
.form { flex: 1; min-height: 0; display: flex; flex-direction: column; padding: 24px 19px 0 20px; }
.field { flex: none; height: 62px; margin-right: 2px; }
.field > label { display: block; height: 24px; line-height: 22px; text-shadow: 1px 0 currentColor; }
.field > label.req::before { content: ""; display: inline-block; width: 4px; height: 4px; margin: 0 3px 3px -2px; border-radius: 2px; background: #e00; vertical-align: middle; }
.field input[type="text"], .field select { display: block; width: 100%; height: 24px; padding: 0 8px; border: 1px solid #ccc; border-radius: 2px; background: #fff; color: #444; appearance: none; outline: 0; }
.field.subject { height: 66px; }
.field.subject input[type="text"] { height: 22px; }
.method-row { display: flex; gap: 20px; }
.method-row select { flex: 1; }
.checks { flex: none; display: flex; align-items: center; height: 24px; padding-right: 34px; }
.checks input { appearance: none; flex: none; width: 17px; height: 17px; margin: 0 8px 0 4px; border: 1px solid #ccc; border-radius: 3px; background: #fff; }
.box { display: grid; align-items: center; }
.box > * { grid-area: 1 / 1; }
.spin { justify-self: end; width: 16px; height: 22px; margin-right: 1px; display: flex; flex-direction: column; align-items: center; justify-content: center; gap: 6px; background: #f0f0f0; }
.caret { justify-self: end; margin-right: 8px; }
.field.message { height: 24px; display: flex; align-items: flex-start; gap: 4px; }
.field.message .help { margin-top: 5px; }
.editor { flex: 1; min-height: 0; display: flex; flex-direction: column; border: 1px solid #b5b5b5; border-bottom: 0; box-shadow: 1px 1px 2px rgba(0, 0, 0, .15); color: #595959; font-family: "Liberation Sans", Arial, sans-serif; }
.editor-menu, .editor-tools { flex: none; height: 35px; display: flex; align-items: center; border-bottom: 1px solid #ddd; }
.editor-menu { gap: 16px; padding-left: 8px; }
.editor-menu button { display: flex; align-items: center; gap: 4px; }
.editor-menu i { border: 4px solid transparent; border-top-color: #b5b8bd; border-bottom: 0; }
.editor-tools { border-bottom: 1px solid #a5a5a5; padding-left: 10px; gap: 18px; }
.editor-tools .formats { height: 34px; padding-left: 9px; margin-left: -8px; border-left: 1px solid #ccc; }
.editor textarea { flex: 1; width: 100%; margin: 0; padding: 15px 8px; border: 0; outline: 0; resize: none; color: #000; line-height: 16px; }

.help-dialog { left: calc(50% - 308px); width: 600px; flex-direction: column; border: 1px solid #d0d0d0; border-bottom: 0; }
.help-top { flex: none; height: 5px; background: #d1d1d3; }
.help-body { flex: 1; min-height: 0; display: flex; }
.help-table { flex: 1; display: block; margin: 0 20px; }
.help-table thead, .help-table tbody { display: block; }
.help-table tr { display: grid; grid-template-columns: 1fr 2fr; border-top: 1px solid #eee; }
.help-table td, .help-table th { padding: 8px; text-align: left; }
.help-table td:first-child, .help-table td:nth-child(2), .help-table th:first-child, .help-table th:nth-child(2) { grid-area: 1 / 1; }
.help-table thead tr { border: 0; border-bottom: 2px solid #eee; }
.help-table th { padding: 5px 5px 10px; font-weight: normal; color: #777; text-shadow: 1px 0 currentColor; }
.help-table th.num { padding: 7px 8px; }
.help-table tbody tr:nth-child(odd) { background: #f9f9f9; }
.help-table tbody tr:first-child { border-top-color: #f9f9f9; }
.help-body .scroll { padding: 7px 0 5px; justify-content: space-between; }
.help-body .thumb { flex: 1; margin: 29px 0 5px; }
.help-foot { flex: none; height: 29px; display: flex; align-items: flex-start; justify-content: flex-end; padding: 10px 10px 0 0; background: #f4f4f4; }
.ok { flex: none; width: 48px; height: 27px; border: 1px solid #777; border-radius: 14px; background: linear-gradient(#bdbdbd, #8d8d8d 60%); color: #fff; }
```
